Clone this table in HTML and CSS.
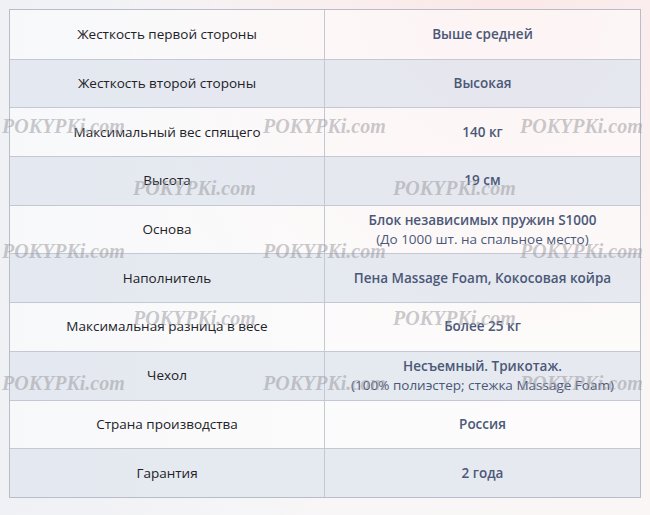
FILE: index.html
```html
<!DOCTYPE html>
<html lang="ru">
<head>
<meta charset="utf-8">
<link rel="stylesheet" href="styles.css">
</head>
<body>
<div class="page">
  <div class="specs">
    <div class="row"><div class="name">Жесткость первой стороны</div><div class="val">Выше средней</div></div>
    <div class="row alt"><div class="name">Жесткость второй стороны</div><div class="val">Высокая</div></div>
    <div class="row"><div class="name">Максимальный вес спящего</div><div class="val">140 кг</div></div>
    <div class="row alt"><div class="name">Высота</div><div class="val">19 см</div></div>
    <div class="row"><div class="name">Основа</div><div class="val"><span>Блок независимых пружин S1000</span><span class="note">(До 1000 шт. на спальное место)</span></div></div>
    <div class="row alt"><div class="name">Наполнитель</div><div class="val">Пена Massage Foam, Кокосовая койра</div></div>
    <div class="row"><div class="name">Максимальная разница в весе</div><div class="val">Более 25 кг</div></div>
    <div class="row alt"><div class="name">Чехол</div><div class="val"><span>Несъемный. Трикотаж.</span><span class="note">(100% полиэстер; стежка Massage Foam)</span></div></div>
    <div class="row"><div class="name">Страна производства</div><div class="val">Россия</div></div>
    <div class="row alt"><div class="name">Гарантия</div><div class="val">2 года</div></div>
  </div>
  <div class="marks" aria-hidden="true">
    <span class="wm" style="left:2px;top:114px">POKYPKi.com</span>
    <span class="wm" style="left:263px;top:114px">POKYPKi.com</span>
    <span class="wm" style="left:520px;top:114px">POKYPKi.com</span>
    <span class="wm" style="left:133px;top:176px">POKYPKi.com</span>
    <span class="wm" style="left:393px;top:176px">POKYPKi.com</span>
    <span class="wm" style="left:2px;top:239px">POKYPKi.com</span>
    <span class="wm" style="left:263px;top:239px">POKYPKi.com</span>
    <span class="wm" style="left:520px;top:239px">POKYPKi.com</span>
    <span class="wm" style="left:133px;top:306px">POKYPKi.com</span>
    <span class="wm" style="left:393px;top:306px">POKYPKi.com</span>
    <span class="wm" style="left:2px;top:371px">POKYPKi.com</span>
    <span class="wm" style="left:263px;top:371px">POKYPKi.com</span>
    <span class="wm" style="left:520px;top:371px">POKYPKi.com</span>
  </div>
</div>
</body>
</html>
```

FILE: styles.css
```css
html, body {
  margin: 0;
  padding: 0;
}
body {
  width: 650px;
  height: 515px;
  overflow: hidden;
  font-family: "Open Sans", "Noto Sans", sans-serif;
  background:
    radial-gradient(ellipse at 78% 0%, #fbe8e8 0%, rgba(251,232,232,0) 55%),
    linear-gradient(90deg, #eff1f5 0%, #f8f6f7 50%, #fbf6f6 100%);
}
.page {
  position: relative;
  padding: 9px;
  height: 497px;
}
.specs {
  width: 630px;
  border: 1px solid #b9bdca;
  display: flex;
  flex-direction: column;
}
.row {
  display: grid;
  grid-template-columns: 315px 315px;
  height: 48.7px;
  border-top: 1px solid #c3c8d4;
  box-sizing: border-box;
  background: rgba(255, 255, 255, 0.5);
}
.row:first-child {
  border-top: 0;
}
.row.alt {
  background: rgba(226, 230, 238, 0.85);
}
.name, .val {
  display: flex;
  flex-direction: column;
  align-items: center;
  justify-content: center;
  text-align: center;
  font-size: 13.5px;
  line-height: 19px;
}
.name {
  color: #222226;
  border-right: 1px solid #c3c8d4;
}
.val {
  color: #4b5878;
  font-weight: 600;
}
.val .note {
  font-weight: 400;
}
.marks {
  position: absolute;
  inset: 0;
  pointer-events: none;
}
.wm {
  position: absolute;
  font-family: "Liberation Serif", serif;
  font-style: italic;
  font-weight: 700;
  font-size: 20px;
  line-height: 24px;
  color: rgba(150, 150, 155, 0.5);
  white-space: nowrap;
}
```
